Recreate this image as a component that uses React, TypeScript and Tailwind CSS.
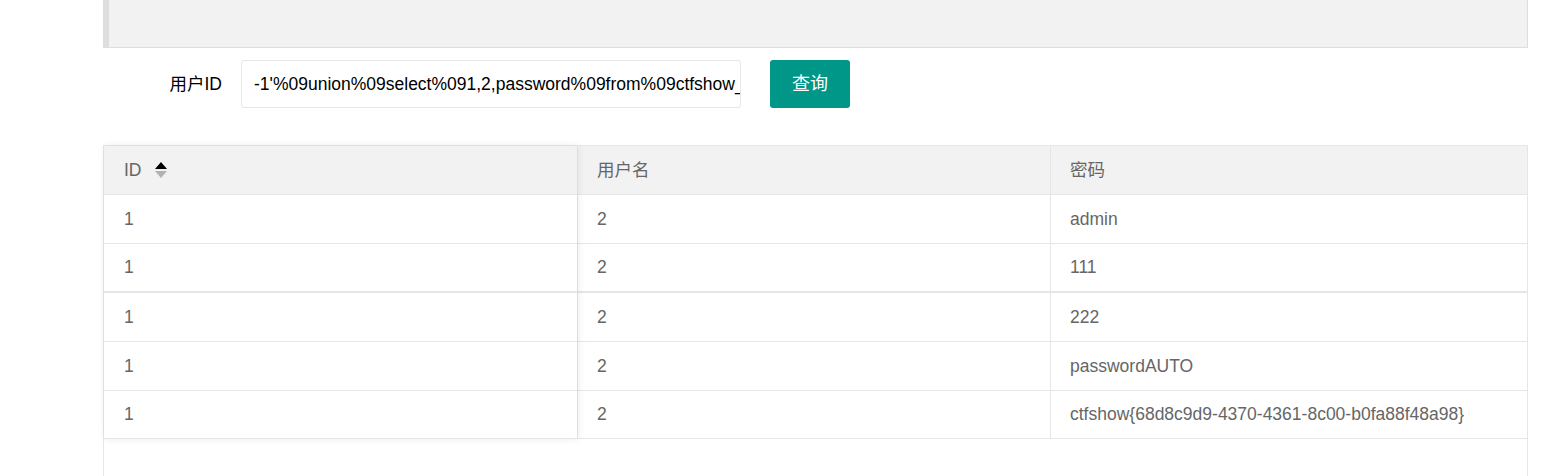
import React from "react";

const rows = [
  { id: "1", name: "2", pwd: "admin" },
  { id: "1", name: "2", pwd: "111" },
  { id: "1", name: "2", pwd: "222" },
  { id: "1", name: "2", pwd: "passwordAUTO" },
  { id: "1", name: "2", pwd: "ctfshow{68d8c9d9-4370-4361-8c00-b0fa88f48a98}" },
];

const font = { fontFamily: '"Liberation Sans", Arial, "Noto Sans CJK SC", sans-serif' };

function SortIcon() {
  return (
    <span className="ml-[13px] inline-flex flex-col gap-[2px]">
      <span className="block h-0 w-0 border-x-[6.5px] border-b-[7px] border-x-transparent border-b-black" />
      <span className="block h-0 w-0 border-x-[6.5px] border-t-[7px] border-x-transparent border-t-[#b2b2b2]" />
    </span>
  );
}

function rowCls(i: number) {
  if (i === 1) return "h-[49px] border-b-2";
  if (i === 4) return "h-[48px] border-b";
  return "h-[49px] border-b";
}

export default function App() {
  return (
    <div className="h-[476px] w-full overflow-hidden bg-white text-[17.5px] text-[#666]" style={font}>
      <div className="ml-[103px] mr-[32px]">
        {/* quote block */}
        <div className="h-[48px] border-b border-l-[6px] border-r border-[#dedede] bg-[#f2f2f2]" />

        {/* form */}
        <div className="mt-[12px] flex items-center">
          <label className="w-[138px] shrink-0 pr-[19px] text-right text-black">用户ID</label>
          <input
            readOnly
            value="-1'%09union%09select%091,2,password%09from%09ctfshow_user"
            className="h-[48px] w-[500px] rounded-[3px] border border-[#e6e6e6] bg-white pl-[12px] text-[17.5px] text-black outline-none"
            style={font}
          />
          <button className="ml-[29px] h-[48px] w-[80px] rounded-[3px] bg-[#009688] text-[18px] text-white">
            查询
          </button>
        </div>

        {/* table */}
        <div className="relative mt-[37px] h-[340px] border border-[#e6e6e6] bg-white">
          <div className="flex">
            {/* fixed left column */}
            <div className="relative z-10 w-[473px] shrink-0 bg-white shadow-[1px_0_8px_rgba(0,0,0,0.08)]">
              <div className="flex h-[49px] items-center border-b border-[#e6e6e6] bg-[#f2f2f2] pl-[20px]">
                <span>ID</span>
                <SortIcon />
              </div>
              {rows.map((r, i) => (
                <div key={i} className={`flex items-center border-[#e6e6e6] pl-[20px] ${rowCls(i)}`}>
                  {r.id}
                </div>
              ))}
            </div>
            {/* rest */}
            <div className="flex-1 border-l border-[#e6e6e6]">
              <div className="flex h-[49px] border-b border-[#e6e6e6] bg-[#f2f2f2]">
                <div className="flex w-[473px] items-center border-r border-[#e6e6e6] pl-[19px]">用户名</div>
                <div className="flex flex-1 items-center pl-[19px]">密码</div>
              </div>
              {rows.map((r, i) => (
                <div key={i} className={`flex border-[#e6e6e6] ${rowCls(i)}`}>
                  <div className="flex w-[473px] items-center border-r border-[#e6e6e6] pl-[19px]">{r.name}</div>
                  <div className="flex flex-1 items-center pl-[19px]">{r.pwd}</div>
                </div>
              ))}
            </div>
          </div>
        </div>
      </div>
    </div>
  );
}
